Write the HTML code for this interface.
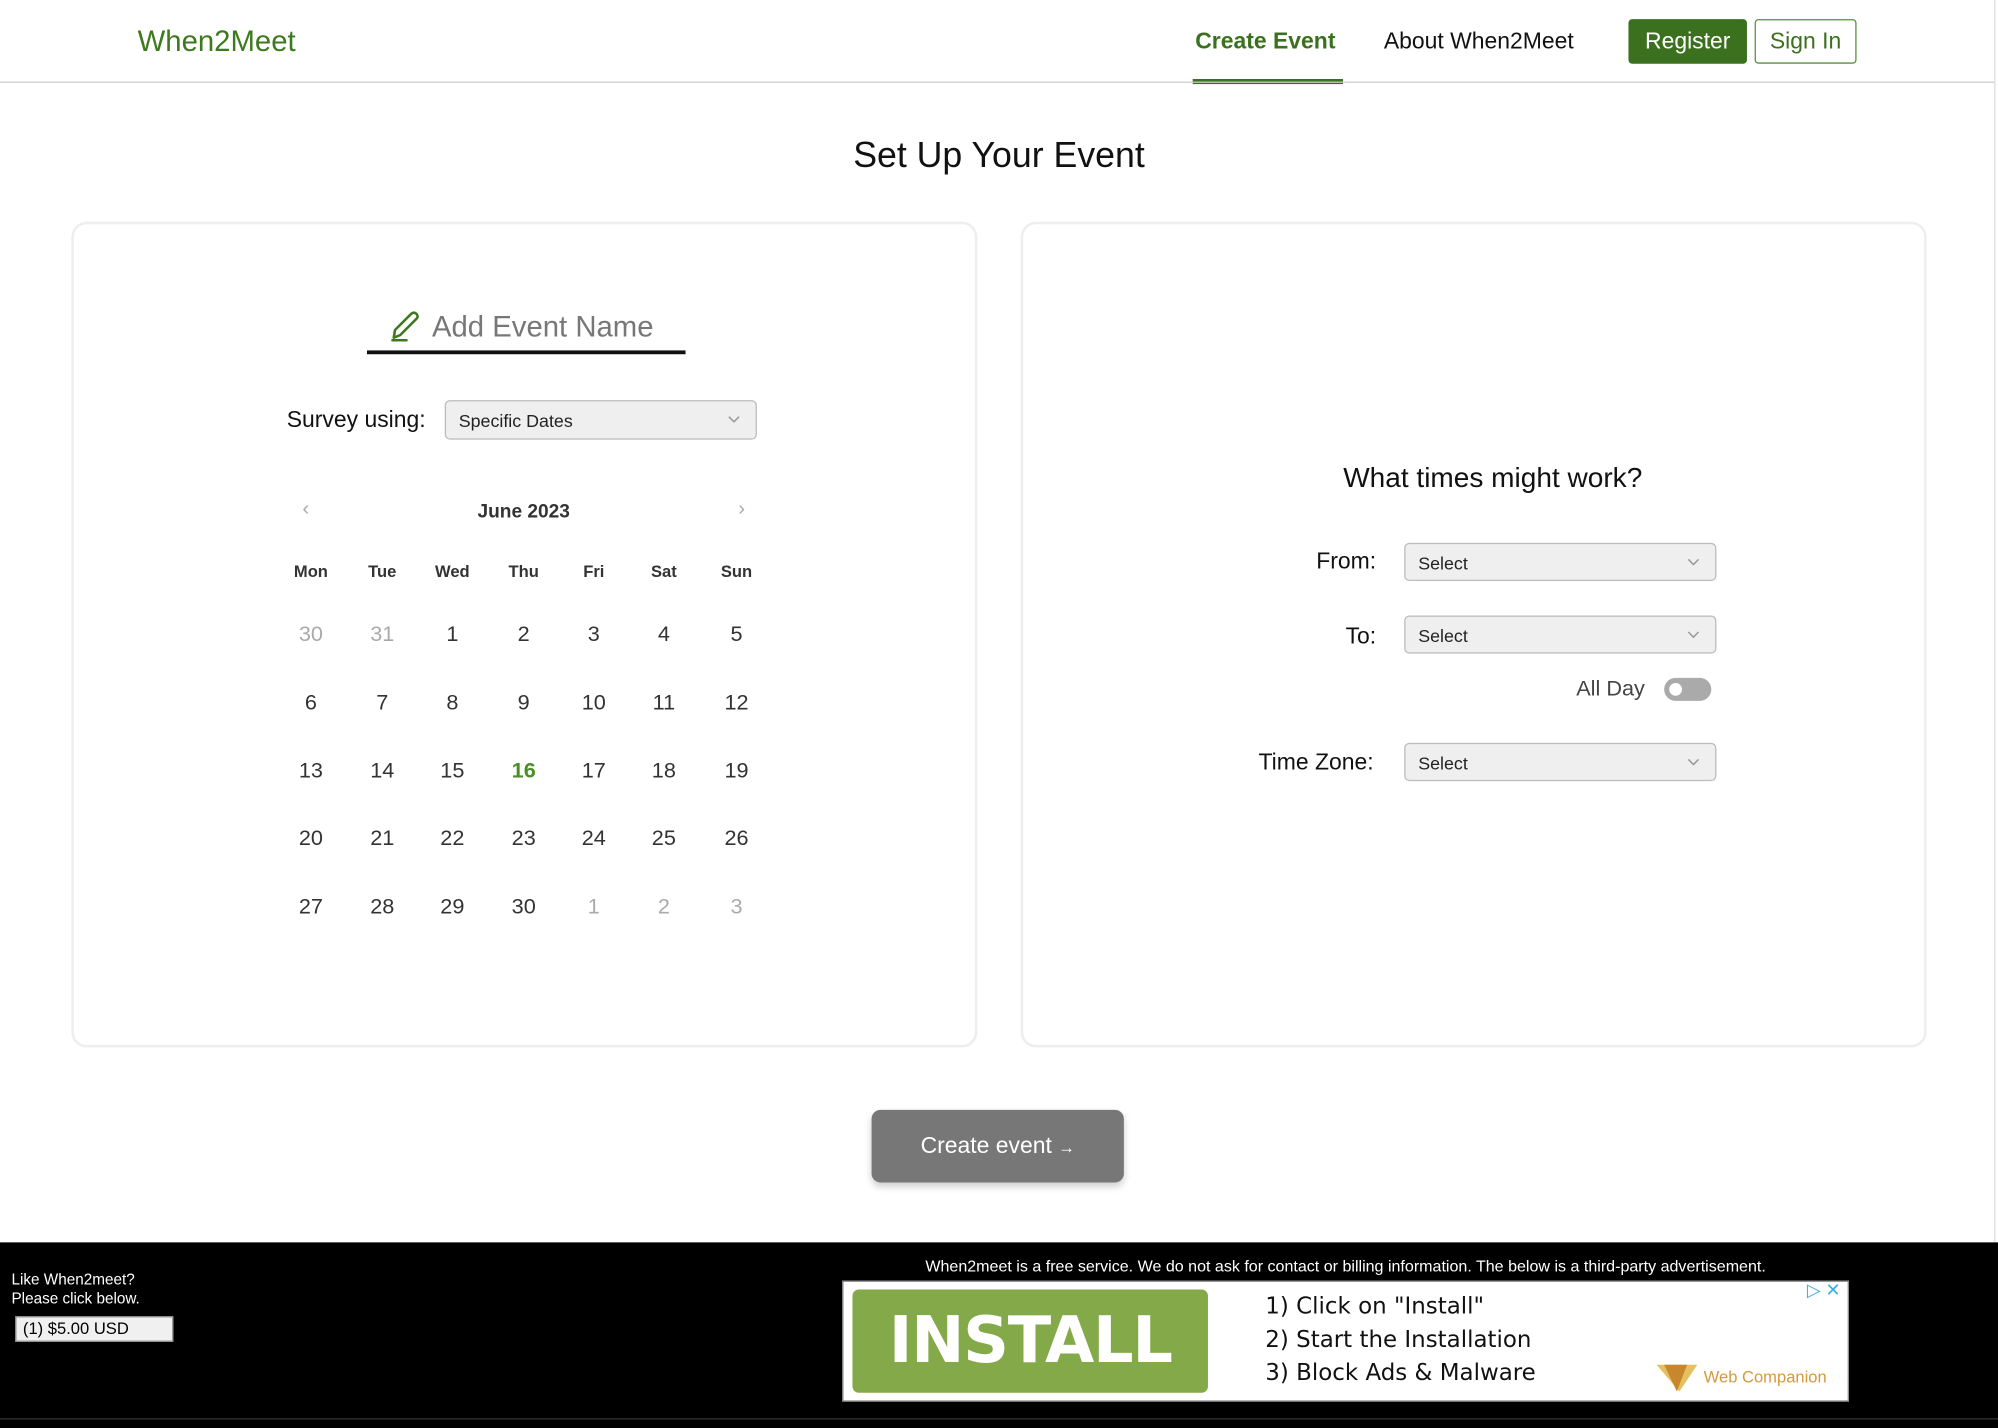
<!DOCTYPE html>
<html><head><meta charset="utf-8"><style>
html,body{margin:0;padding:0;width:1998px;height:1428px;overflow:hidden;background:#fff;}
#w{position:absolute;left:0;top:0;width:1568px;height:1121px;transform:scale(1.27423);transform-origin:0 0;font-family:"Liberation Sans",sans-serif;color:#111;}
.a{position:absolute;}
.card{position:absolute;border:2px solid #eee;border-radius:12px;background:#fff;box-sizing:border-box;}
.sel{position:absolute;background:#efefef;border:1px solid #bbb;border-radius:4px;box-sizing:border-box;font-size:14px;color:#222;padding-left:10px;}
.sel svg{position:absolute;right:12px;top:11px;}
.cal div{position:absolute;width:40px;text-align:center;font-size:17px;color:#333;transform:translateX(-20px);}
.cal .h{font-size:13px;font-weight:bold;color:#333;}
.cal .g{color:#aaa;}
</style></head><body><div id="w">
<div class="a" style="left:108px;top:19px;font-size:23px;color:#3d7a1f;">When2Meet</div>
<div class="a" style="left:938px;top:22px;font-size:18px;font-weight:bold;color:#3b711e;">Create Event</div>
<div class="a" style="left:936px;top:62px;width:118px;height:4px;background:#3b711e;"></div>
<div class="a" style="left:1086px;top:22px;font-size:18px;color:#111;">About When2Meet</div>
<div class="a" style="left:1278px;top:15px;width:93px;height:35px;background:#3b711e;border-radius:3px;color:#fff;font-size:18px;text-align:center;line-height:35px;">Register</div>
<div class="a" style="left:1377px;top:15px;width:80px;height:35px;border:1px solid #5a8f3a;box-sizing:border-box;border-radius:3px;color:#3b711e;font-size:18px;text-align:center;line-height:33px;">Sign In</div>
<div class="a" style="left:0;top:64px;width:1566px;height:1px;background:#ccc;"></div>
<div class="a" style="left:1565px;top:0;width:1px;height:975px;background:#ddd;"></div>
<div class="a" style="left:0;top:106px;width:1568px;text-align:center;font-size:28px;color:#111;">Set Up Your Event</div>

<div class="card" style="left:56px;top:174px;width:711px;height:648px;"></div>
<div class="card" style="left:801px;top:174px;width:711px;height:648px;"></div>

<svg class="a" style="left:305px;top:243px" width="26" height="26" viewBox="0 0 26 26"><path d="M4 22 L5 16 L18 3 Q20 1.5 22 3.5 Q23.5 5.5 22 7 L9 20 Z M3 24 H14" fill="none" stroke="#3d7a1f" stroke-width="2" stroke-linejoin="round" stroke-linecap="round"/></svg>
<div class="a" style="left:339px;top:243px;font-size:23px;color:#777;">Add Event Name</div>
<div class="a" style="left:288px;top:275px;width:250px;height:3px;background:#111;"></div>

<div class="a" style="left:225px;top:319px;font-size:18px;">Survey using:</div>
<div class="sel" style="left:349px;top:314px;width:245px;height:31px;line-height:31px;">Specific Dates<svg width="10" height="7" viewBox="0 0 10 7"><path d="M1 1 L5 5 L9 1" fill="none" stroke="#999" stroke-width="1.2"/></svg></div>

<div class="cal">
<div class="a g" style="left:240px;top:391px;font-size:16px;">‹</div>
<div class="a g" style="left:582px;top:391px;font-size:16px;">›</div>
<div class="a" style="left:411px;top:393px;width:120px;transform:translateX(-60px);font-weight:bold;font-size:15px;color:#333;">June 2023</div>
<div class="h" style="left:244px;top:441px">Mon</div><div class="h" style="left:300px;top:441px">Tue</div><div class="h" style="left:355px;top:441px">Wed</div><div class="h" style="left:411px;top:441px">Thu</div><div class="h" style="left:466px;top:441px">Fri</div><div class="h" style="left:521px;top:441px">Sat</div><div class="h" style="left:578px;top:441px">Sun</div>
<div class="g" style="left:244px;top:488px">30</div><div class="g" style="left:300px;top:488px">31</div><div style="left:355px;top:488px">1</div><div style="left:411px;top:488px">2</div><div style="left:466px;top:488px">3</div><div style="left:521px;top:488px">4</div><div style="left:578px;top:488px">5</div>
<div style="left:244px;top:542px">6</div><div style="left:300px;top:542px">7</div><div style="left:355px;top:542px">8</div><div style="left:411px;top:542px">9</div><div style="left:466px;top:542px">10</div><div style="left:521px;top:542px">11</div><div style="left:578px;top:542px">12</div>
<div style="left:244px;top:595px">13</div><div style="left:300px;top:595px">14</div><div style="left:355px;top:595px">15</div><div style="left:411px;top:595px;color:#4a8f25;font-weight:bold">16</div><div style="left:466px;top:595px">17</div><div style="left:521px;top:595px">18</div><div style="left:578px;top:595px">19</div>
<div style="left:244px;top:648px">20</div><div style="left:300px;top:648px">21</div><div style="left:355px;top:648px">22</div><div style="left:411px;top:648px">23</div><div style="left:466px;top:648px">24</div><div style="left:521px;top:648px">25</div><div style="left:578px;top:648px">26</div>
<div style="left:244px;top:702px">27</div><div style="left:300px;top:702px">28</div><div style="left:355px;top:702px">29</div><div style="left:411px;top:702px">30</div><div class="g" style="left:466px;top:702px">1</div><div class="g" style="left:521px;top:702px">2</div><div class="g" style="left:578px;top:702px">3</div>
</div>

<div class="a" style="left:801px;top:362px;width:741px;text-align:center;font-size:22px;">What times might work?</div>
<div class="a" style="left:900px;top:430px;width:180px;text-align:right;font-size:18px;">From:</div>
<div class="sel" style="left:1102px;top:426px;width:245px;height:30px;line-height:30px;">Select<svg width="10" height="7" viewBox="0 0 10 7"><path d="M1 1 L5 5 L9 1" fill="none" stroke="#999" stroke-width="1.2"/></svg></div>
<div class="a" style="left:900px;top:489px;width:180px;text-align:right;font-size:18px;">To:</div>
<div class="sel" style="left:1102px;top:483px;width:245px;height:30px;line-height:30px;">Select<svg width="10" height="7" viewBox="0 0 10 7"><path d="M1 1 L5 5 L9 1" fill="none" stroke="#999" stroke-width="1.2"/></svg></div>
<div class="a" style="left:1237px;top:531px;font-size:17px;color:#444;">All Day</div>
<div class="a" style="left:1306px;top:532px;width:37px;height:18px;border-radius:9px;background:#aaa;"></div>
<div class="a" style="left:1310px;top:536px;width:10px;height:10px;border-radius:5px;background:#fff;"></div>
<div class="a" style="left:900px;top:588px;width:178px;text-align:right;font-size:18px;">Time Zone:</div>
<div class="sel" style="left:1102px;top:583px;width:245px;height:30px;line-height:30px;">Select<svg width="10" height="7" viewBox="0 0 10 7"><path d="M1 1 L5 5 L9 1" fill="none" stroke="#999" stroke-width="1.2"/></svg></div>

<div class="a" style="left:684px;top:871px;width:198px;height:57px;border-radius:7px;background:#777;box-shadow:0 3px 6px rgba(0,0,0,.2);color:#fff;font-size:18px;text-align:center;line-height:57px;">Create event <span style="font-size:13px;">→</span></div>

<div class="a" style="left:0;top:975px;width:1568px;height:146px;background:#000;"></div>
<div class="a" style="left:0;top:1113px;width:1568px;height:1px;background:#333;"></div>
<div class="a" style="left:9px;top:997px;font-size:12px;color:#fff;line-height:15px;">Like When2meet?<br>Please click below.</div>
<div class="a" style="left:12px;top:1033px;width:124px;height:20px;background:#f0f0f0;border:1px solid #999;box-sizing:border-box;font-size:13px;color:#000;padding-left:5px;line-height:18px;">(1) $5.00 USD</div>
<div class="a" style="left:660px;top:987px;width:792px;text-align:center;font-size:12.6px;color:#fff;">When2meet is a free service. We do not ask for contact or billing information. The below is a third-party advertisement.</div>
<div class="a" style="left:661px;top:1005px;width:790px;height:95px;background:#fff;border:1px solid #888;box-sizing:border-box;"></div>
<div class="a" style="left:669px;top:1012px;width:279px;height:81px;background:#84a949;border-radius:5px;color:#fff;font-weight:bold;font-size:50px;text-align:center;line-height:81px;font-family:'DejaVu Sans',sans-serif;letter-spacing:-1px;">INSTALL</div>
<div class="a" style="left:993px;top:1013px;font-size:18px;line-height:26px;color:#111;font-family:'DejaVu Sans',sans-serif;">1) Click on "Install"<br>2) Start the Installation<br>3) Block Ads &amp; Malware</div>
<svg class="a" style="left:1298px;top:1068px" width="36" height="26" viewBox="0 0 36 26"><path d="M2 3 H34 L20 24 Z" fill="#e6c060"/><path d="M8 3 L18 24 L26 3 Z" fill="#c8872c"/></svg>
<div class="a" style="left:1337px;top:1073px;font-size:13px;color:#d49a3c;">Web Companion</div>
<div class="a" style="left:1418px;top:1004px;font-size:14px;color:#3aaee0;">▷ ✕</div>
</div></body></html>
